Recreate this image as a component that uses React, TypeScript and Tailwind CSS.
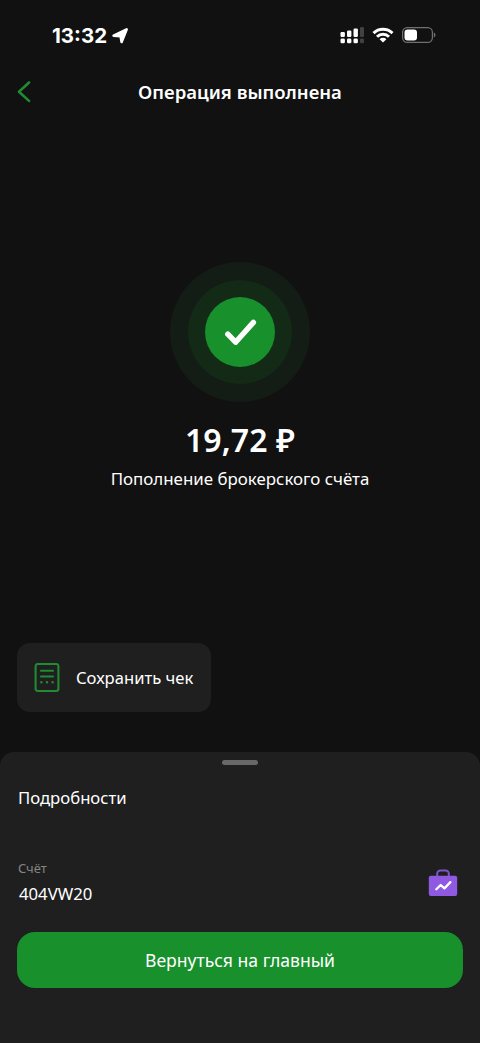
import type { ReactNode } from 'react'

function StatusBar() {
  return (
    <div className="flex h-[70px] items-center justify-between pr-[44px] pl-[52px]">
      <div className="flex items-center gap-[5px] pt-px">
        <span className="font-['Inter',sans-serif] text-[20.5px] leading-6 font-bold">13:32</span>
        <svg className="h-4 w-4" viewBox="0 0 16 16" fill="#fff" stroke="#fff" strokeLinejoin="round">
          <path d="M14.6 1.4 9.6 14 8.6 8.2 1.6 7.6Z" strokeWidth="2.6" />
        </svg>
      </div>
      <div className="flex items-center gap-2">
        <SignalIcon />
        <WifiIcon />
        <BatteryIcon />
      </div>
    </div>
  )
}

function SignalIcon() {
  return (
    <svg className="h-[18px] w-6" viewBox="0 0 24 18" fill="#fff">
      <rect x="0.5" y="6" width="4.4" height="5" rx="1.2" />
      <rect x="7" y="4.5" width="4.4" height="6.5" rx="1.2" />
      <rect x="13.5" y="2.5" width="4.4" height="8.5" rx="1.2" />
      <rect x="20" y="1" width="4" height="10" rx="1.2" fill="#424242" />
      <rect x="0.5" y="12.6" width="4.4" height="4.6" rx="1.3" />
      <rect x="7" y="12.6" width="4.4" height="4.6" rx="1.3" />
      <rect x="13.5" y="12.6" width="4.4" height="4.6" rx="1.3" />
      <rect x="20" y="12.6" width="4" height="4.6" rx="1.3" fill="#424242" />
    </svg>
  )
}

function WifiIcon() {
  return (
    <svg className="h-4 w-[22px]" viewBox="0 0 22 16" fill="none" stroke="#fff" strokeWidth="2.9">
      <path d="M1.5 6.1a13.6 13.6 0 0 1 19 0" />
      <path d="M5 9.8a8.5 8.5 0 0 1 12 0" />
      <path d="M11 15.6 7.6 12.2a4.8 4.8 0 0 1 6.8 0Z" fill="#fff" stroke="none" />
    </svg>
  )
}

function BatteryIcon() {
  return (
    <svg className="h-4 w-[34px]" viewBox="0 0 34 16">
      <rect x="0.6" y="0.6" width="29.8" height="14.8" rx="4.6" fill="none" stroke="#707070" strokeWidth="1.2" />
      <rect x="2.5" y="2.5" width="12.5" height="11" rx="3" fill="#fff" />
      <path d="M31.8 5.5c2.2.8 2.2 4.2 0 5Z" fill="#707070" />
    </svg>
  )
}

function SuccessMark() {
  return (
    <div className="flex size-[140px] items-center justify-center rounded-full bg-[#131c15]">
      <div className="flex size-[104px] items-center justify-center rounded-full bg-[#132a16]">
        <div className="flex size-[70px] items-center justify-center rounded-full bg-[#18902c]">
          <svg className="size-[70px]" viewBox="0 0 70 70" fill="none" stroke="#fff" strokeWidth="5.4" strokeLinecap="round" strokeLinejoin="round">
            <path d="M22.8 37.2 30.6 45.2 48.4 25.4" />
          </svg>
        </div>
      </div>
    </div>
  )
}

function ReceiptIcon() {
  return (
    <svg className="h-[30px] w-[26px]" viewBox="0 0 26 30" fill="none" stroke="#218b32" strokeWidth="2.1" strokeLinecap="round">
      <rect x="1.6" y="1" width="22.8" height="27" rx="2.2" />
      <path d="M7 7.8h12M7 13.5h12" />
      <path d="M7.4 19.2h.01M13 19.2h.01M18.6 19.2h.01" strokeWidth="2.5" />
    </svg>
  )
}

function BriefcaseIcon() {
  return (
    <svg className="h-7 w-[30px]" viewBox="0 0 30 28" fill="none">
      <path d="M9.2 8V5.6a3.2 3.2 0 0 1 3.2-3.2h5.2a3.2 3.2 0 0 1 3.2 3.2V8" stroke="#8054c8" strokeWidth="2" />
      <rect x="0.8" y="7.8" width="28.4" height="20.2" rx="2" fill="#9059e1" />
      <path d="m8.3 21.3 4.4-4.3 3.7 3.4 6-6.3" stroke="#fff" strokeWidth="2.3" strokeLinecap="round" strokeLinejoin="round" />
    </svg>
  )
}

function ActionTile({ icon, label }: { icon: ReactNode; label: string }) {
  return (
    <button className="flex h-[69px] w-[194px] items-center gap-4 rounded-[13px] bg-[#1f1f1f] pl-[17px]">
      {icon}
      <span className="text-[16.6px] leading-6 whitespace-nowrap">{label}</span>
    </button>
  )
}

export default function App() {
  return (
    <div className="flex h-[1043px] w-[480px] flex-col overflow-hidden bg-[#111111] font-['Noto_Sans',sans-serif] text-white">
      <StatusBar />

      <header className="grid h-[43px] grid-cols-[60px_1fr_60px] items-center">
        <button className="pl-[17px]" aria-label="Назад">
          <svg className="h-[22px] w-[14px]" viewBox="0 0 14 22" fill="none" stroke="#218b32" strokeWidth="2.6" strokeLinecap="round" strokeLinejoin="round">
            <path d="M12 1.5 2 10.7l10 9.2" />
          </svg>
        </button>
        <h1 className="text-center text-[18.5px] leading-6 font-semibold">Операция выполнена</h1>
      </header>

      {/* Result */}
      <main className="flex flex-1 flex-col items-center pt-[149px]">
        <SuccessMark />
        <p className="mt-[18px] text-[32px] leading-10 font-semibold tracking-[0.1px]">19,72 ₽</p>
        <p className="mt-[7px] text-[16.9px] leading-6">Пополнение брокерского счёта</p>
      </main>

      <div className="px-[17px] pb-10">
        <ActionTile icon={<ReceiptIcon />} label="Сохранить чек" />
      </div>

      {/* Details sheet */}
      <section className="flex h-[291px] flex-col rounded-t-[14px] bg-[#1f1f1f] px-[17px] pt-2">
        <div className="h-[5px] w-9 self-center rounded-full bg-[#686868]" />
        <h2 className="mt-[21px] pl-px text-[16.7px] leading-6">Подробности</h2>
        <div className="mt-12 flex items-center justify-between pr-[5px] pl-px">
          <div>
            <p className="text-[13px] leading-5 text-[#858585]">Счёт</p>
            <p className="mt-1 pl-px text-[16.7px] leading-6">404VW20</p>
          </div>
          <BriefcaseIcon />
        </div>
        <button className="mt-[26px] h-14 rounded-[18px] bg-[#18902c] text-[17.6px] leading-6">
          Вернуться на главный
        </button>
      </section>
    </div>
  )
}
